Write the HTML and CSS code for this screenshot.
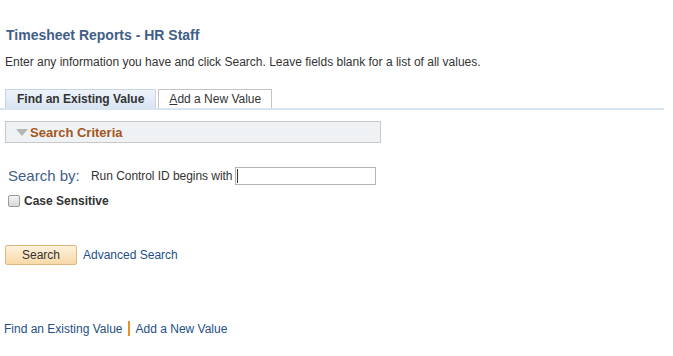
FILE: index.html
```html
<!DOCTYPE html>
<html>
<head>
<meta charset="utf-8">
<link rel="stylesheet" href="styles.css">
</head>
<body>
<div class="page">
  <h1 class="title">Timesheet Reports - HR Staff</h1>
  <p class="intro">Enter any information you have and click Search. Leave fields blank for a list of all values.</p>
  <div class="tabs">
    <div class="tab active">Find an Existing Value</div>
    <div class="tab"><u>A</u>dd a New Value</div>
  </div>
  <div class="criteria">
    <span class="tri"></span><span class="crit-label">Search Criteria</span>
  </div>
  <div class="searchby">
    <span class="sb-label">Search by:</span>
    <span class="sb-field">Run Control ID begins with</span>
    <span class="inputwrap"><input class="sb-input" type="text"><span class="caret"></span></span>
  </div>
  <label class="case"><span class="cb"></span><span>Case Sensitive</span></label>
  <div class="actions">
    <button class="btn">Search</button>
    <a class="link">Advanced Search</a>
  </div>
  <div class="footer">
    <a class="link">Find an Existing Value</a><span class="sep"></span><a class="link">Add a New Value</a>
  </div>
</div>
</body>
</html>
```
FILE: styles.css
```css
* { box-sizing: border-box; }
body { margin: 0; background: #fff; font-family: "Liberation Sans", Arial, sans-serif; color: #333; }
.page { width: 664px; }
.title { margin: 0; padding: 26px 0 0 6px; font-size: 14px; font-weight: bold; color: #3f5e88; line-height: 18px; }
.intro { margin: 0; padding: 11px 0 0 5px; font-size: 12px; line-height: 14px; color: #333; }
.tabs { display: flex; gap: 2px; margin-top: 20px; padding-left: 5px; border-bottom: 2px solid #d9e4f2; height: 21px; }
.tab { height: 19px; padding: 0 10px; font-size: 12px; line-height: 18px; border: 1px solid #c3c3c3; border-bottom: none; background: #fff; color: #333; }
.tab.active { background: linear-gradient(#eef3fa, #d9e4f2); font-weight: bold; color: #333; border-color: #c8d4e2; padding: 0 11px; }
.criteria { margin: 11px 0 0 5px; width: 376px; height: 22px; border: 1px solid #c8c8c8; background: #eef2f5; display: flex; align-items: center; padding-left: 10px; }
.tri { width: 0; height: 0; border-left: 6px solid transparent; border-right: 6px solid transparent; border-top: 7px solid #b5b5b5; margin-right: 2px; }
.crit-label { font-size: 13px; font-weight: bold; color: #a5561c; }
.searchby { display: flex; align-items: center; margin-top: 23px; padding-left: 8px; height: 19px; }
.sb-label { font-size: 15px; color: #3f5e88; width: 83px; }
.sb-field { font-size: 12px; color: #333; margin-right: 3px; letter-spacing: -0.05px; }
.inputwrap { position: relative; display: inline-block; }
.sb-input { width: 141px; height: 18px; border: 1px solid #b5b5b5; padding: 0; margin: 0; display: block; }
.caret { position: absolute; left: 2px; top: 2px; width: 1px; height: 14px; background: #333; }
.case { display: flex; align-items: center; margin-top: 9px; padding-left: 8px; font-size: 12px; font-weight: bold; color: #333; }
.cb { width: 12px; height: 12px; margin-right: 4px; border: 1px solid #9a9a9a; border-radius: 2px; background: linear-gradient(#f4f4f4, #d8d8d8); }
.actions { display: flex; align-items: center; margin-top: 37px; padding-left: 5px; }
.btn { width: 72px; height: 20px; padding: 0; border: 1px solid #e2b780; border-radius: 2px; background: linear-gradient(#fdf1dc, #f8d9a8); font-family: "Liberation Sans", Arial, sans-serif; font-size: 12px; color: #333; }
.link { color: #1e4f86; font-size: 12px; text-decoration: none; }
.actions .link { margin-left: 6px; }
.footer { display: flex; align-items: center; margin-top: 56px; padding-left: 4px; }
.sep { width: 2px; height: 15px; background: #e8912c; margin: 0 6px 0 5px; }
```
